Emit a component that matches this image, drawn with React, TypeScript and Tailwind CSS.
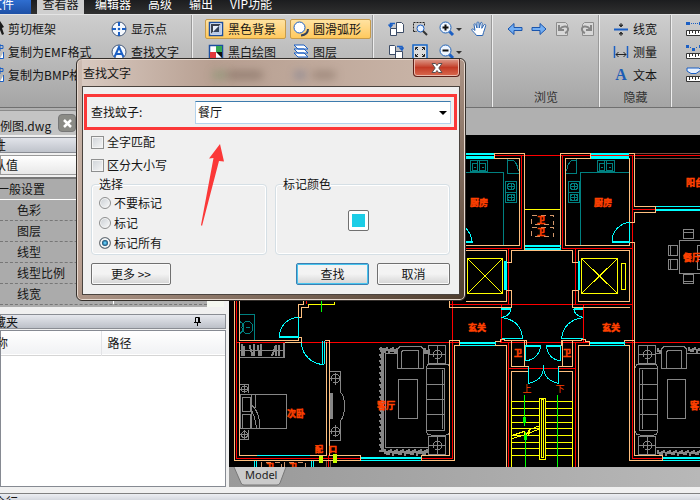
import React from "react";

const BLUE = "#1b5fc4";

function Icon({ children, w = 16 }: { children: React.ReactNode; w?: number }) {
  return (
    <svg width={w} height="16" viewBox={`0 0 ${w} 16`} fill="none" className="shrink-0" aria-hidden="true">
      {children}
    </svg>
  );
}

const PointIcon = () => (
  <Icon>
    <circle cx="8" cy="8" r="7" fill="#f4f8fd" stroke="#44597a" />
    <path d="M8 1v4M8 11v4M1 8h4M11 8h4" stroke={BLUE} strokeWidth="2" />
    <circle cx="8" cy="8" r="1.3" fill={BLUE} />
  </Icon>
);
const FindIcon = () => (
  <Icon>
    <circle cx="8" cy="8" r="7" fill="#f4f8fd" stroke="#44597a" />
    <path d="M3.5 13 8 3l4.5 10M5.5 10h5" stroke={BLUE} strokeWidth="2" />
  </Icon>
);
const CursorIcon = () => (
  <Icon w={4}>
    <path d="M0 0l4 6-2 1 2 6-2 1-2-5z" fill="#1c1c1c" />
  </Icon>
);
const ClipIcon = () => (
  <Icon w={4}>
    <path d="M0 1.500h3v3H0M0 0v7" stroke={BLUE} />
    <path d="M0 14.500h3.500V8" stroke={BLUE} fill="#fff" />
  </Icon>
);
const BackgroundIcon = () => (
  <Icon>
    <rect x="1.500" y="1.500" width="13" height="13" fill="#fff" stroke="#1d4f9f" strokeWidth="1.500" />
    <path d="M3 3h10L3 13z" fill="#3a4250" />
    <path d="M13 3v10H3z" fill="#b9cbe8" />
    <path d="M5 5h6L5 11z" fill="#e9f0fa" />
    <path d="M11 5v6H5z" fill="#33435c" />
  </Icon>
);
const MonoIcon = () => (
  <Icon>
    <rect x="1.500" y="1.500" width="13" height="13" fill="#fff" stroke="#1d4f9f" strokeWidth="1.500" />
    <path d="M8 2h6v6H8z" fill="#35a853" />
    <path d="M2 8h6v6H2z" fill="#e23a3a" />
    <path d="M8 8h6v6z" fill="#111" />
  </Icon>
);
const ArcIcon = () => (
  <Icon>
    <circle cx="6.500" cy="6.500" r="5.500" fill="#fff" stroke={BLUE} />
    <path d="M15 8c0 4-3 6-7 6.500" stroke="#34425a" strokeWidth="2" />
  </Icon>
);
const LayersIcon = () => (
  <Icon>
    <path d="M1 9l4 4h10l-4-4zM1 5l4 4h10l-4-4zM1 1l4 4h10l-4-4z" fill="#fff" stroke={BLUE} />
  </Icon>
);
const PagesIcon = ({ flip = false }: { flip?: boolean }) => (
  <Icon>
    {flip ? (
      <g stroke="#3c4c66">
        <path d="M1.500 1.500h5l1 1v8h-6zM7.500 7.500h7v7h-7z" fill="#fff" />
        <path d="M9 2.500h5V6M11.500 3.500 14 6l1.500-2.500" stroke={BLUE} strokeWidth="1.500" />
      </g>
    ) : (
      <g stroke="#3c4c66">
        <path d="M8.500 1.500h5l2 2v8h-7zM2.500 7.500h6v7h-6z" fill="#fff" />
        <path d="M7 2.500H2.500V6M.500 3.500 2.500 6l2-2.500" stroke={BLUE} strokeWidth="1.500" />
      </g>
    )}
  </Icon>
);
const AreaZoomIcon = () => (
  <Icon>
    <path d="M1.500 10.500v-9h11V5M1.500 10.500H5" stroke="#222" strokeDasharray="2 1" />
    <circle cx="8.500" cy="7.500" r="3.500" fill="#eaf3ff" stroke={BLUE} />
    <path d="M11 10l4 4" stroke="#333" strokeWidth="2" />
  </Icon>
);
const FitIcon = () => (
  <Icon>
    <rect x="1" y="1" width="14" height="14" fill="#dcdcdc" stroke="#1667c9" strokeWidth="1.500" />
    <path d="M3.500 6V3.500H6M10 3.500h2.500V6M3.500 10v2.500H6M10 12.500h2.500V10M4 4l2 2M12 4l-2 2M4 12l2-2M12 12l-2-2" stroke="#222" />
  </Icon>
);
const MagnifyIcon = ({ plus = false }: { plus?: boolean }) => (
  <Icon w={24}>
    <circle cx="6.500" cy="6.500" r="5.500" fill="#eef5ff" stroke="#2465b8" />
    <path d={plus ? "M3.500 6.500h6M6.500 3.500v6" : "M3.500 6.500h6"} stroke="#111" strokeWidth="2" />
    <path d="M10.500 10.500l3.500 3.500" stroke={BLUE} strokeWidth="3" />
    <path d="M17 7h6l-3 3z" fill="#333" />
  </Icon>
);
const HandIcon = () => (
  <Icon>
    <path
      d="M5.500 14.500C4 12 1 10 .700 8.500c.300-1 2-.500 3.300 1L3 3.500c.200-1 1.500-1 1.800 0L6 7V1.800c.200-1.100 1.700-1.100 1.900 0L8.200 7 9.500 2c.400-1 1.700-.700 1.700.300L10.800 7.300l2.200-3.500c.600-.800 1.900-.300 1.700.700-.400 2-1.500 5-2.200 7l-.800 3z"
      fill="#fff"
      stroke="#2b66b5"
    />
  </Icon>
);
const ArrowIcon = ({ right = false }: { right?: boolean }) => (
  <Icon>
    <path
      d={right ? "M1 6.500h8v-4l6 5.500-6 5.500v-4H1z" : "M15 6.500H7v-4L1 8l6 5.500v-4h8z"}
      fill="#73aef2"
      stroke="#1a55ad"
    />
  </Icon>
);
const TurnIcon = ({ right = false }: { right?: boolean }) => (
  <Icon>
    <g transform={right ? "translate(16 0) scale(-1 1)" : undefined}>
      <path d="M1.500 1.500h9l2 2v11h-11z" fill="#d8d8d8" stroke="#8d8d8d" />
      <path d="M4 4v5h5M5 8c3-4 9-3 8 1-.400 1.500-1.500 2.500-3 3" stroke="#858585" strokeWidth="2" />
    </g>
  </Icon>
);
const LineWidthIcon = () => (
  <Icon>
    <path d="M1 8.500h14" stroke={BLUE} strokeWidth="2" />
    <path d="M6 4h4L8 6zM6 13h4l-2-2zM8 2v2M8 13v2" fill="#333" stroke="#333" />
  </Icon>
);
const MeasureIcon = () => (
  <Icon>
    <path d="M1.500 2v12M14.500 2v12" stroke={BLUE} strokeWidth="1.500" />
    <path d="M3 10.500h10M5.500 8 3 10.500 5.500 13M10.500 8l2.500 2.500-2.500 2.500" stroke="#222" />
  </Icon>
);
const LetterIcon = () => (
  <span className="w-4 shrink-0 text-center font-['Liberation_Serif',serif] text-base leading-4 font-bold text-[#1d5cb5]" aria-hidden="true">
    A
  </span>
);
const RulerIcon = ({ kind }: { kind: number }) => (
  <Icon>
    {kind === 0 && (
      <>
        <path d="M0 1h4v3H0zM13 1h4v3h-4z" fill={BLUE} />
        <path d="M5 2.500h8" stroke={BLUE} strokeDasharray="1 1" />
      </>
    )}
    {kind === 1 && <path d="M0 1h3v3H0zM6 4h3v3H6zM13 1h3v3h-3zM4 3h1v1H4zM10 3h1v1h-1z" fill={BLUE} />}
    {kind === 2 && <path d="M1 1h12l2 2-5 3.500H5L1 4z" fill="#e7f1ff" stroke={BLUE} />}
    <path d="M.500 9.500h16v5H.500zM3.500 10v3M6.500 10v2M9.500 10v3M12.500 10v2" fill="#fff" stroke="#333" />
  </Icon>
);

function Tool({ icon, label, active = false }: { icon: React.ReactNode; label?: string; active?: boolean }) {
  return (
    <button
      type="button"
      aria-label={label ?? "工具"}
      className={
        active
          ? "flex h-5 w-[81px] items-center gap-1 rounded-xs border border-[#c79b4a] bg-linear-to-b from-[#ffe2a0] to-[#ffc95c] px-0.5 whitespace-nowrap"
          : "flex h-5 items-center gap-1 whitespace-nowrap"
      }
    >
      {icon}
      {label && <span>{label}</span>}
    </button>
  );
}

function Group({ className, label, children }: { className: string; label?: string; children: React.ReactNode }) {
  return (
    <section className={`flex shrink-0 flex-col border-r border-[#eeeeee] pt-1 shadow-[inset_-1px_0_0_#9a9a9a] ${className}`}>
      <div className="flex h-[70px]">{children}</div>
      {label && <div className="text-center leading-5 text-[#333]">{label}</div>}
    </section>
  );
}

const Column = ({ children, className = "" }: { children: React.ReactNode; className?: string }) => (
  <div className={`flex flex-col gap-[3px] ${className}`}>{children}</div>
);

function Ribbon() {
  return (
    <div className="flex h-[94px] shrink-0 overflow-hidden border-t border-b border-t-[#e4e4e4] border-b-[#707070] bg-linear-to-b from-[#cecece] to-[#a5a5a5]">
      <Group className="w-[193px]">
        <Column className="w-[111px]">
          <Tool icon={<CursorIcon />} label="剪切框架" />
          <Tool icon={<ClipIcon />} label="复制为EMF格式" />
          <Tool icon={<ClipIcon />} label="复制为BMP格式" />
        </Column>
        <Column>
          <Tool icon={<PointIcon />} label="显示点" />
          <Tool icon={<FindIcon />} label="查找文字" />
        </Column>
      </Group>
      <Group className="w-[181px] pl-3">
        <Column className="w-[85px]">
          <Tool active icon={<BackgroundIcon />} label="黑色背景" />
          <div className="pl-[3px]"><Tool icon={<MonoIcon />} label="黑白绘图" /></div>
        </Column>
        <Column>
          <Tool active icon={<ArcIcon />} label="圆滑弧形" />
          <div className="pl-[3px]"><Tool icon={<LayersIcon />} label="图层" /></div>
        </Column>
      </Group>
      <Group className="w-[119px] pl-3.5">
        <div className="flex gap-2">
          <Column>
            <Tool icon={<PagesIcon />} />
            <Tool icon={<PagesIcon flip />} />
          </Column>
          <Column>
            <Tool icon={<AreaZoomIcon />} />
            <Tool icon={<FitIcon />} />
          </Column>
          <Column className="ml-[3px]">
            <Tool icon={<MagnifyIcon plus />} />
            <Tool icon={<MagnifyIcon />} />
          </Column>
          <Tool icon={<HandIcon />} />
        </div>
      </Group>
      <Group className="w-[107px]" label="浏览">
        <div className="flex gap-2 pl-3.5">
          <Tool icon={<ArrowIcon />} />
          <Tool icon={<ArrowIcon right />} />
          <Tool icon={<TurnIcon />} />
          <Tool icon={<TurnIcon right />} />
        </div>
      </Group>
      <Group className="w-[72px]" label="隐藏">
        <Column className="pl-[13px]">
          <Tool icon={<LineWidthIcon />} label="线宽" />
          <Tool icon={<MeasureIcon />} label="测量" />
          <Tool icon={<LetterIcon />} label="文本" />
        </Column>
      </Group>
      <Group className="w-20 pl-3.5">
        <Column>
          <Tool icon={<RulerIcon kind={0} />} />
          <Tool icon={<RulerIcon kind={1} />} />
          <Tool icon={<RulerIcon kind={2} />} />
        </Column>
      </Group>
    </div>
  );
}

function SidePanel() {
  return (
    <aside className="flex w-[229px] shrink-0 flex-col overflow-hidden bg-[#f0f0f0]">
      <div className="mt-0.5 h-4 w-[226px] border border-[#8a8d94] bg-linear-to-b from-[#e2e4ea] to-[#bfc3cb] leading-[14px]">
        <h2 className="-ml-[19px]">属性</h2>
      </div>
      <div className="mt-0.5 h-5 w-[226px] border border-[#9a9a9a] bg-linear-to-b from-white to-[#e8e8e8] leading-[18px]">
        <div className="-ml-[19px]">默认值</div>
      </div>
      <div className="mt-0.5 flex h-[130px] w-[226px] border-t-2 border-[#777]">
        <ul className="w-[207px] bg-[#ababab]">
          <li className="h-[21px] border-b border-white leading-5">
            <div className="-ml-[3px]">一般设置</div>
          </li>
          {["色彩", "图层", "线型", "线型比例", "线宽"].map((t) => (
            <li key={t} className="flex h-[21px] border-b border-dashed border-[#777] leading-5">
              <span className="w-[114px] border-r border-white pl-[17px]">{t}</span>
            </li>
          ))}
        </ul>
        <div className="w-[17px] bg-[#f4f7f0]" />
      </div>
      <div className="mt-[7px] flex h-[15px] w-[226px] shrink-0 items-center justify-between border border-[#8a8d94] bg-linear-to-b from-[#e6e8ee] to-[#bcc0c8] pr-6">
        <h2 className="-ml-[19px] leading-[13px]">收藏夹</h2>
        <svg width="7" height="9" viewBox="0 0 7 9" fill="none" stroke="#000" aria-label="固定">
          <path d="M1.500 .500h4v5M1.500 .500v5M4.500 1v4M0 5.500h7M3.500 6v3" />
        </svg>
      </div>
      <div className="mt-px w-[226px] grow border border-[#868a92] bg-white">
        <table className="w-full table-fixed border-collapse text-left">
          <thead>
            <tr className="h-6 border-b border-[#d5d5d5] bg-linear-to-b from-white to-[#f1f2f4]">
              <th className="w-[100px] border-r border-[#e2e3e6] font-normal">
                <div className="-ml-[17px]">名称</div>
              </th>
              <th className="pl-1.5 font-normal">路径</th>
            </tr>
          </thead>
        </table>
      </div>
    </aside>
  );
}

function SideTable({ x, y }: { x: number; y: number }) {
  return (
    <g transform={`translate(${x} ${y})`}>
      <path d="M.500 .500h17v18H.500zM.500 9.500h17M9.500 .500v18" />
      <circle cx="9.500" cy="9.500" r="4.500" />
    </g>
  );
}

function Stove({ x }: { x: number }) {
  return (
    <g transform={`translate(${x} 181)`}>
      <path d="M.500 .500h11v21H.500zM.500 11.500h11M2 3h1M9 3h1M2 13h1M9 13h1M2 19h1M9 19h1" />
      <circle cx="6" cy="5.500" r="3.500" />
      <circle cx="6" cy="16.500" r="3.500" />
      <path d="M2 5.500h8M6.500 2v7M2 16.500h8M6.500 13v7" />
    </g>
  );
}

function Sink({ x }: { x: number }) {
  return (
    <g transform={`translate(${x} 160)`}>
      <path d="M.500 .500h17v11H.500zM2.500 3.500h5v7h-5zM9.500 3.500h6v7h-6zM7 1v4M9 1v6M4 7h2M12 7h2" />
    </g>
  );
}

const CHAIRS = "M683.500 229.500h10v9h-10zM683.500 232.500h10M668.500 245.500h9v10h-9zM670.500 245.500v10M668.500 259.500h9v10h-9zM670.500 259.500v10M683.500 274.500h10v9h-10zM684 281.500h9M697.500 245.500h9v10h-9zM697.500 259.500h9v10h-9z";

const rugSide = Array.from({ length: 52 }, (_, i) => `M${379 + ((i * 7) % 3)} ${348.5 + i * 2}H384`).join("");
const rugEdge = (x: number, n: number, y: number, h: number) =>
  Array.from({ length: n }, (_, i) => `M${x + 0.5 + i * 2} ${y + ((i * 5) % 3)}v${h - ((i * 3) % 2)}`).join("");

function FloorPlan() {
  return (
    <svg
      className="absolute inset-0 h-full w-full"
      viewBox="229 135 471 332"
      preserveAspectRatio="xMinYMin slice"
      fill="none"
      shapeRendering="crispEdges"
      role="img"
      aria-label="平面图"
    >
      <g stroke="#008080">
        <path d="M466 172.500H503.500V245M629 172.500H580.500V245M507.500 158V173.500H519M507.500 160.500h6q4 3 5 11M566 173.500H576.500V158M576.500 160.500h-5q-4 3-5 11M240 314.500H254.500V340" />
        <ellipse cx="247.500" cy="327.500" rx="5.500" ry="6" />
        <path d="M240 321.500q4 3 4 6t-4 6M246 327.500h4" />
        <Sink x={470} />
        <Sink x={597} />
        <Stove x={505} />
        <Stove x={568} />
      </g>

      <g stroke="#868686">
        <path d={CHAIRS} />
        <path d="M702 240.500H679.500V273.500H702" />
        <path d="M239.500 342.500H284.500V357.500H239.500M240 350.500H284M283.500 343v14" />
        <path d="M242 344v12M244 346v10M249.500 345l3 11M253.500 344v12M257.500 345l2 11M260.500 344v12M272 356l4-11M276 345v11M279 345v11" strokeWidth="2" />
        <path d="M240.500 394.500H286.500V428.500H240.500zM251.500 395v33M255.500 395v13M242.500 397.500h8v14h-8zM242.500 414.500h8v14h-8zM251.500 405q9 8 8 23M251.500 410q4 8 5 18" />
        <path d="M240 384.500H248.500V393M240 439.500H248.500V430M240 389.500h8M240 434.500h8M244.500 385v8M244.500 430v9" />
        <circle cx="244.500" cy="389" r="3" />
        <circle cx="244.500" cy="434.500" r="3" />
        <path d="M330 371.500H340.500V392Q344.500 396 344.500 406T340.500 421V440.500H330M330 378.500h11M330 431.500h11M335.500 373v12M335.500 425v12" />
        <circle cx="335.500" cy="378.500" r="4.500" />
        <circle cx="335.500" cy="431.500" r="4.500" />
        <path d="M331.500 393v26" strokeWidth="3" />
        <path d={rugSide} strokeWidth="2" />
        <path d={rugEdge(380, 9, 347, 5) + rugEdge(424, 3, 348, 5) + rugEdge(384, 22, 449, 5)} strokeWidth="2" />
        <path d={rugEdge(657, 3, 348, 4) + rugEdge(688, 8, 347, 4) + rugEdge(657, 24, 450, 4)} strokeWidth="2" />
        <path d="M397 353.500H385.500V447.500H428M383.500 350V452M423 353.500h6M656 353.500h5M687 353.500h14M656 447.500h45" />
        <path d="M400 368.500h-2.500V351q0-5 6-5h14q6 0 6 5v17.500zM401.500 368V353q0-3 4-3h10q4 0 3 3V368" fill="#000" />
        <path d="M398.500 379.500h19v39h-19zM667.500 379.500h18v39h-18z" />
        <path d="M664 368.500h-2.500V351q0-5 6-5h13q6 0 6 5v17.500zM666.500 368V353q0-3 4-3h8q4 0 3 3V368" fill="#000" />
        <SideTable x={428} y={345} />
        <SideTable x={428} y={436} />
        <SideTable x={638} y={345} />
        <SideTable x={638} y={436} />
        <path d="M426.500 368q0-4 4-4h15q4 0 4 4M426.500 368V431q0 4 4 4h15q4 0 4-4M444.500 368V431M442.500 370V429M427 368.500h17M427 384.500h17M427 399.500h17M427 414.500h17M427 430.500h17" />
        <path d="M657.500 368q0-4-4-4h-14q-4 0-4 4M657.500 368V431q0 4-4 4h-14q-4 0-4-4M639.500 368V431M642.500 370V429M640 368.500h17M640 384.500h17M640 399.500h17M640 414.500h17M640 430.500h17" />
      </g>

      <path d="M634 153.500H701M634 158.500H701M326.500 461v6M330.500 461v6" stroke="#7b4a3e" />

      <g stroke="#ff0000">
        <path d="M494 155.500H701M521.500 155V248.500H466M562.500 155V248.500H632.500M632.500 155V458.500H662M632.500 209.500H655" />
        <path d="M508.500 248V304M575.500 248V304M466 304.500H632.500M450 304.500H470M501.500 304V342M583.500 304V342M452.500 301V458.500H236.500V301M236.500 342.500H460M306.500 301v3" />
        <path d="M500 342.500H701M508.500 342V467M575.500 342V467M508.500 368.500H575.500M328.500 455v12" />
      </g>

      <g stroke="#ffc080">
        <path d="M494 153.500H524.500V250M590 153.500H560.500V250M494 158.500H519.500V245.500H466M590 158.500H565.500V245.500H629.500V158M494.500 153v6M590.500 153v6M629 153.500H634.500V206.500H655.500V212.500H634.500V222.500H629.500M629.500 242.500H634.500V340" />
        <path d="M466 250.500H506.500V262.500H511.500V250.500H572.500V262.500H578.500V250.500H629.500V301.500H578.500V290.500H572.500V307.500H629.500M466 301.500H506.500V290.500H511.500V307.500H499M449.500 301V307.500H499" />
        <path d="M460 345.500H506.500V467M495.500 345V341.500H500V339.500H504V340.500H526.500V345.500M511.500 341V366.500H528.500V371.500H511.500V401M524.500 341V366M589.500 345V341.500H585V339.500H581V340.500H561.500V345.500M572.500 341V366.500H558.500V371.500H572.500V401M562.500 341V366M578.500 467V345.500H629.500V460.500H662.500V455.500H634.500V340.500H624.500V345" />
        <path d="M234.500 301V460.500H454.500V345.500H459.500V340.500H449.500V455.500H421.500V460M239.500 301V340.500H298.500V337.500H301.500V342.500H285M239.500 342V455.500H326.500V342M324.500 340.500H329.500V455.500H360.500V460M303.500 301V304.500H298.500V317.500H301.500V307.500H308.500V304" />
      </g>

      <g stroke="#d2976b" strokeDasharray="5 4">
        <path d="M531.500 215.500h22v9h-22zM531.500 227.500h22v9h-22zM261.500 467v-5h20v5M284.500 467v-5h21v5" />
      </g>

      <g stroke="#00ffff">
        <path d="M466 154h28M466 158h28M591 154h38M591 158h38M525 249h36M525 246h36M656 210h45M460 343h36M590 343h35M361 458h60M663 458h38" strokeWidth="2" />
        <path d="M656 206.500H701M466 156.500h28M591 156.500h38M361 460.500h60M663 460.500h38M460 345.500h35M590 345.500h35M257 455.500h53M254.500 461v6M256.500 461v6M311.500 461v6M313.500 461v6" />
        <path d="M629.500 222.500A19 19 0 0 0 612 241M629.500 222v20M466 228Q471 234 472 241M298.500 317.500A19 19 0 0 0 279.500 336M298.500 317v19M301.500 343A23 22 0 0 0 324 364.500M501.500 317.500Q521 320 522.500 338.500H502M501.500 317.500Q510 316 511 309M583.500 317.500Q564 320 561.500 338.500H583M583.500 317.500Q575 316 573.500 309" />
        <path d="M612 242h18M466 242h7M279 337h20M501 309h10M574 309h9M505 261v29M525 346h16M546 346h15" strokeWidth="2" />
        <path d="M506.500 261v29M578.500 261v29M579.500 261v29M322.500 341V364M324.500 341V364M525.500 345V361Q539 359 540.500 346M560.500 345V361Q548 359 546.500 346M528.500 367V383.500Q543 380 543.500 368V365M558.500 367V383.500Q544 380 543.500 368" />
      </g>

      <g stroke="#ffff00">
        <path d="M525 209.500H560M467.500 258.500h35v35h-35zM467.500 258.500l35 35M502.500 258.500l-35 35M581.500 258.500h36v35h-36zM581.500 258.500l36 35M617.500 258.500l-36 35M621.500 263.500h4v26h-4zM308 304.500H334.500v-3" />
        {[401.5, 408.5, 415.5, 422.5, 428.5, 435.5, 442.5, 448.5, 455.5].map((y) => (
          <path key={y} d={`M512 ${y}H539M546 ${y}H572`} />
        ))}
        <path d="M511.500 401V467M572.500 401V467M539.500 398.500h6v61h-6zM541.500 399.500h2v58h-2zM512 435.500l12-4 1 4 4-5-1 5 2-6 9-3.500M512 438.500l14-4 13-5.500" />
      </g>
      <path d="M524.500 395V426M525.500 432V467M557.500 395V467M321.500 301V312" stroke="#00ff00" />
      <path d="M523 417h3v6h-3zM524 435h3v5h-3z" fill="#00ff00" />
      <path d="M319 456h4v7h-4zM333 454h4v9h-4z" fill="#c8ff00" />

      <g
        fill="#ff4000"
        stroke="#ff4000"
        strokeWidth="0.5"
        className="font-['Noto_Sans_CJK_SC',sans-serif] text-[9px] font-bold"
        textAnchor="middle"
      >
        <text x="479" y="206">厨房</text>
        <text x="603" y="206">厨房</text>
        <text x="695" y="186">阳台</text>
        <text x="692" y="261">餐厅</text>
        <text x="477" y="331">玄关</text>
        <text x="611" y="331">玄关</text>
        <text x="296" y="417">次卧</text>
        <text x="386" y="409">客厅</text>
        <text x="699" y="409">客厅</text>
        <g className="text-[8px]">
          <text x="518" y="356">卫</text>
          <text x="567" y="356">卫</text>
          <text x="541" y="223">卫</text>
          <text x="541" y="235">卫</text>
          <text x="319" y="452">配</text>
          <text x="333" y="452">口</text>
          <text x="270" y="470">卫</text>
          <text x="293" y="470">卫</text>
        </g>
        <g stroke="none" className="font-normal">
          <text x="527" y="392">上</text>
          <text x="560" y="392">下</text>
        </g>
      </g>
    </svg>
  );
}

const dialogButton =
  "h-[22px] rounded-xs border border-[#707070] bg-linear-to-b from-[#f3f3f3] from-50% to-[#d4d4d4] leading-5 shadow-[inset_0_0_0_1px_#fafafa]";

function FindDialog() {
  return (
    <div
      role="dialog"
      aria-labelledby="find-title"
      className="absolute top-[58px] left-[76px] w-[390px] rounded-md border border-[#332e2a] bg-linear-to-br from-[#cdbcb2] via-[#b79e90] via-45% to-[#4e3d2e] px-[5px] pb-[5px] shadow-[inset_0_0_0_1px_#e7d9cf]"
    >
      <header className="relative flex h-[27px] items-start justify-between">
        <div className="absolute inset-x-0 top-px bottom-0 bg-linear-to-r from-[#d8c9c0] via-[#b79f91] via-35% to-[#cbb7aa]" />
        <div className="absolute top-3 left-[130px] h-2 w-4 rounded-full bg-[#77926a] opacity-50 blur-xs" />
        <div className="absolute top-3 left-[145px] h-2 w-9 rounded-full bg-[#6e5a4f] opacity-50 blur-xs" />
        <div className="absolute top-3 left-[212px] h-2 w-3 rounded-full bg-[#66708e] opacity-50 blur-xs" />
        <div className="absolute top-3 left-[230px] h-2 w-6 rounded-full bg-[#7c675b] opacity-50 blur-xs" />
        <h1 id="find-title" className="relative pl-px leading-[27px]">查找文字</h1>
        <button
          type="button"
          aria-label="关闭"
          className="relative flex h-[18px] w-[47px] items-center justify-center rounded-b-sm border border-t-0 border-[#5b2019] bg-linear-to-b from-[#dc9c8d] via-[#c23a25] via-50% to-[#d9694f] shadow-[inset_0_0_0_1px_#eab9ac]"
        >
          <svg width="12" height="10" viewBox="0 0 12 10" aria-hidden="true">
            <path d="M1 .500h3.500L6 2.500 7.500 .500H11L7.800 5 11 9.500H7.500L6 7.500 4.500 9.500H1L4.200 5z" fill="#fff" stroke="#5a5050" />
          </svg>
        </button>
      </header>
      <form className="border border-[#4a433e] bg-[#f0f0f0] pt-[7px] pr-0.5 pb-[9px] pl-px" onSubmit={(e) => e.preventDefault()}>
        <div className="flex h-9 items-center border-[3px] border-[#fb3838] pr-[3px] pl-1">
          <label htmlFor="find-text" className="w-[104px]">查找蚊子:</label>
          <div className="relative grow">
            <select id="find-text" className="h-[23px] w-full appearance-none border border-[#b4d3ec] border-t-[#3d7bad] bg-white pl-0.5">
              <option>餐厅</option>
            </select>
            <svg className="pointer-events-none absolute top-[10px] right-1" width="8" height="4" viewBox="0 0 8 4" aria-hidden="true">
              <path d="M0 0h8L4 4z" />
            </svg>
          </div>
        </div>
        <div className="flex flex-col gap-[3px] px-[7px] pt-0.5">
          {["全字匹配", "区分大小写"].map((t) => (
            <label key={t} className="flex h-5 items-center gap-[3px]">
              <input
                type="checkbox"
                className="size-[13px] appearance-none border border-[#8e8f8f] bg-linear-to-br from-[#cfd3d8] to-[#f6f6f6] shadow-[inset_0_0_0_1px_#f4f4f4]"
              />
              {t}
            </label>
          ))}
        </div>
        <div className="flex gap-2 px-[7px]">
          <fieldset className="h-20 w-[176px] rounded-sm border border-[#d5dfe5] px-[7px] shadow-[inset_0_0_0_1px_#fff]">
            <legend className="leading-[18px]">选择</legend>
            {["不要标记", "标记", "标记所有"].map((t, i) => (
              <label key={t} className="flex h-5 items-center gap-[3px]">
                <input
                  type="radio"
                  name="mark"
                  defaultChecked={i === 2}
                  className="size-3 appearance-none rounded-full border border-[#8e8f8f] bg-linear-to-br from-[#c9ced3] to-[#fafafa] shadow-[inset_0_0_0_1px_#f4f4f4] checked:border-[#6f7377] checked:bg-radial checked:from-[#5cc3ee] checked:from-10% checked:to-[#0c3f66] checked:to-45% checked:shadow-[inset_0_0_0_2px_#f4f4f4]"
                />
                {t}
              </label>
            ))}
          </fieldset>
          <fieldset className="h-20 grow rounded-sm border border-[#d5dfe5] px-[7px] shadow-[inset_0_0_0_1px_#fff]">
            <legend className="leading-[18px]">标记颜色</legend>
            <button type="button" aria-label="标记颜色" className="mt-[17px] ml-[65px] block size-[21px] rounded-xs border border-[#707070] bg-white p-[3px]">
              <span className="block size-full bg-[#1ccde6]" />
            </button>
          </fieldset>
        </div>
        <div className="flex gap-2 px-[7px] pt-2">
          <button type="button" className={`w-20 ${dialogButton}`}>更多 &gt;&gt;</button>
          <button type="submit" className="ml-auto h-[22px] w-[73px] rounded-xs border border-[#3c7fb1] bg-linear-to-b from-[#f3f3f3] from-50% to-[#d4d4d4] leading-5 shadow-[inset_0_0_0_1px_#48c4ee]">查找</button>
          <button type="button" className={`w-[73px] ${dialogButton}`}>取消</button>
        </div>
      </form>
    </div>
  );
}

export default function App() {
  return (
    <div className="relative flex h-screen flex-col overflow-hidden bg-[#f0f0f0] font-['Noto_Sans_CJK_SC',sans-serif] text-xs text-[#151515]">
      <nav className="flex h-3.5 shrink-0 items-center bg-linear-to-b from-[#1c1d1f] to-[#303030] text-white">
        <a href="#file" className="flex h-3.5 w-[31px] items-center bg-linear-to-b from-[#2f6ed0] to-[#1d4fa5] pb-1.5 whitespace-nowrap">
          <span className="-ml-2.5">文件</span>
        </a>
        <a href="#viewer" className="ml-1.5 flex h-3.5 w-[47px] items-center justify-center bg-[#cfcfcf] pb-1.5 text-[#151515]">查看器</a>
        <div className="flex gap-[17px] pb-1.5 pl-[11px] whitespace-nowrap">
          <a href="#editor">编辑器</a>
          <a href="#advanced">高级</a>
          <a href="#output">输出</a>
          <a href="#vip">VIP功能</a>
        </div>
      </nav>
      <Ribbon />
      <div className="flex h-[27px] shrink-0 items-end bg-[#b0b0b0]">
        <div className="flex h-[25px] w-20 items-center justify-between rounded-tr-md border-t border-r border-[#8a8a8a] bg-[#c4c4c4] pr-[3px]">
          <span className="-ml-3 pt-1.5 whitespace-nowrap">示例图.dwg</span>
          <button type="button" aria-label="关闭文件" className="flex size-[18px] items-center justify-center rounded-sm border border-[#777] bg-[#8b8b86]">
            <svg width="9" height="9" viewBox="0 0 9 9" aria-hidden="true">
              <path d="M1 1l7 7M8 1 1 8" stroke="#fff" strokeWidth="2.500" />
            </svg>
          </button>
        </div>
      </div>
      <main className="flex min-h-0 grow">
        <SidePanel />
        <section className="flex min-w-0 grow flex-col">
          <div className="relative grow overflow-hidden bg-black">
            <FloorPlan />
          </div>
          <div className="relative flex h-5 shrink-0 items-start bg-linear-to-r from-[#999] to-[#b8b8b8]">
            <svg className="absolute left-1 top-0" width="54" height="19" viewBox="0 0 54 19" aria-hidden="true">
              <path d="M1 0 8 16q1 2 3 2H44q2 0 3-2L53 0" fill="#cbcbcb" stroke="#777" />
            </svg>
            <button type="button" className="relative ml-4 font-['Noto_Sans',sans-serif] text-[11px] leading-4 text-[#222]">Model</button>
          </div>
        </section>
      </main>
      <footer className="mt-1.5 h-[7px] shrink-0 overflow-hidden border-t border-[#808080] bg-linear-to-b from-[#eceef2] to-[#d5d8df] leading-4">
        <div className="-ml-[18px]">命令行</div>
      </footer>
      <FindDialog />
      <svg className="pointer-events-none absolute top-[144px] left-[200px]" width="25" height="83" viewBox="0 0 25 83" aria-hidden="true">
        <path d="M20 0 9 14.500l4.500-.500L1 81l1 1 17-65 5 .500z" fill="#fb3838" />
      </svg>
    </div>
  );
}
